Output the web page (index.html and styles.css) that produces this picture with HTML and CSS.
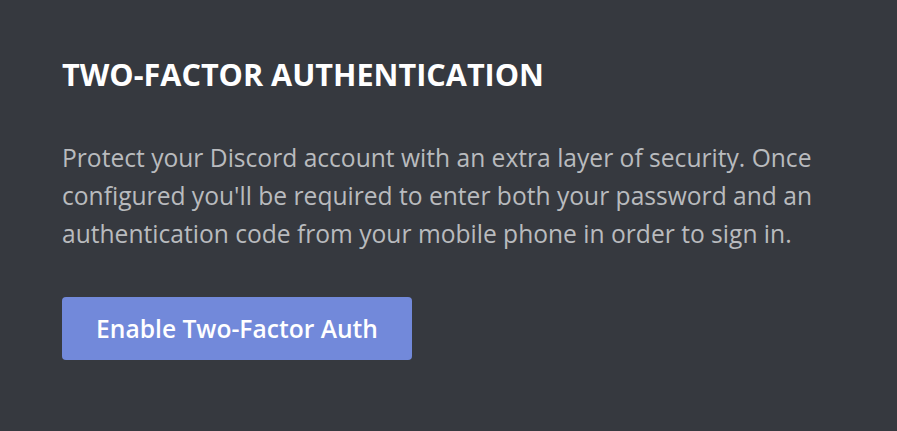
FILE: index.html
```html
<!DOCTYPE html>
<html>
<head>
<meta charset="utf-8">
<link rel="stylesheet" href="styles.css">
</head>
<body>
<section class="panel">
  <h2 class="title">TWO-FACTOR AUTHENTICATION</h2>
  <p class="desc">Protect your Discord account with an extra layer of security. Once configured you'll be required to enter both your password and an authentication code from your mobile phone in order to sign in.</p>
  <button class="btn">Enable Two-Factor Auth</button>
</section>
</body>
</html>
```
FILE: styles.css
```css
html, body {
  margin: 0;
  padding: 0;
  background: #36393f;
}
body {
  width: 897px;
  height: 431px;
  overflow: hidden;
  font-family: "Open Sans", "Lato", sans-serif;
}
.panel {
  padding: 56px 0 0 62px;
  display: flex;
  flex-direction: column;
  align-items: flex-start;
}
.title {
  margin: 0;
  color: #ffffff;
  font-size: 30.6px;
  font-weight: 700;
  line-height: 36px;
}
.desc {
  margin: 46.5px 0 0 0;
  width: 800px;
  color: #b9bbbe;
  font-size: 24.6px;
  line-height: 38px;
}
.btn {
  margin-top: 44.5px;
  width: 350px;
  height: 63px;
  border: 0;
  border-radius: 4px;
  background: #7289da;
  color: #ffffff;
  font-family: inherit;
  font-size: 24.6px;
  font-weight: 600;
  padding: 0;
}
```
